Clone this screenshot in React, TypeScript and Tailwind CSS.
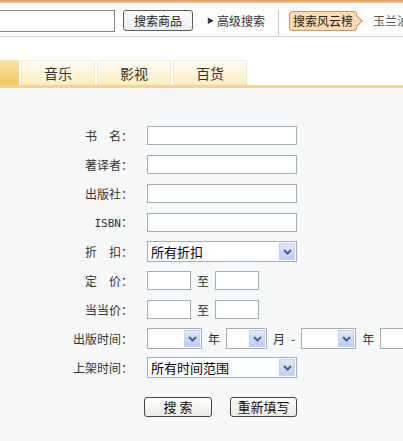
import { ReactNode } from 'react';

function Chevron() {
    return (
        <div className="flex h-[17px] w-[16px] shrink-0 items-center justify-center border border-[#c3d3f5] bg-gradient-to-b from-[#dfe8fd] to-[#b9cdf5]">
            <svg width="9" height="6" viewBox="0 0 9 6">
                <path d="M1 1 L4.5 4.5 L8 1" fill="none" stroke="#4d6185" strokeWidth="2" />
            </svg>
        </div>
    );
}

function Select({ width, text }: { width: string; text?: string }) {
    return (
        <div className={`flex h-[21px] shrink-0 items-center justify-between border border-[#a5acb2] bg-white pl-[3px] pr-px ${width}`}>
            <span className="text-[13px] leading-none text-black">{text}</span>
            <Chevron />
        </div>
    );
}

function Row({ label, children }: { label: ReactNode; children: ReactNode }) {
    return (
        <div className="flex h-[29px] items-center">
            <div className="w-[133px] shrink-0 text-right text-[12px] text-[#333]">{label}</div>
            <div className="ml-[14px] flex items-center">{children}</div>
        </div>
    );
}

const input = 'h-[19px] shrink-0 border border-[#a5acb2] bg-white';

export default function App() {
    return (
        <div
            className="flex h-[441px] w-[403px] flex-col overflow-hidden bg-white"
            style={{ fontFamily: '"Noto Sans CJK SC", "Noto Sans", sans-serif' }}
        >
            <div className="h-[3px] shrink-0 bg-gradient-to-b from-[#e39a55] to-[#f3c89a]" />

            {/* search bar */}
            <div className="flex h-[34px] shrink-0 items-start overflow-hidden whitespace-nowrap border-b border-[#d6d6d6] pt-[7px]">
                <div className="h-[22px] w-[115px] shrink-0 border border-l-0 border-[#7b8a7c] bg-white" />
                <button className="ml-[8px] flex h-[21px] w-[70px] shrink-0 items-center justify-center rounded-[3px] border border-[#5c5c5c] bg-gradient-to-b from-white to-[#eeeeee] text-[12px] text-[#222]">
                    搜索商品
                </button>
                <span className="ml-[14px] mt-[7px] shrink-0 text-[7px] leading-none text-[#333]">▶</span>
                <span className="ml-[3px] shrink-0 text-[12px] leading-[21px] text-[#333]">高级搜索</span>
                <div className="ml-[13px] h-[25px] w-px shrink-0 bg-[#c8c8c8]" />
                <div className="relative ml-[10px] mt-px flex h-[20px] shrink-0 items-center rounded-[3px] border border-[#c99660] bg-[#fddcb5] px-[3px] text-[12px] text-[#222]">
                    搜索风云榜
                    <div className="absolute right-[-5px] top-[5px] h-[8px] w-[8px] rotate-45 border-r border-t border-[#c99660] bg-[#fddcb5]" />
                </div>
                <span className="ml-[16px] shrink-0 text-[12px] leading-[21px] text-[#555]">玉兰油</span>
            </div>

            {/* tabs */}
            <div className="mt-[23px] flex h-[25px] shrink-0 items-stretch">
                <div className="w-[19px] bg-gradient-to-b from-[#fbe6a8] to-[#f3c85c]" />
                {['音乐', '影视', '百货'].map((t) => (
                    <div
                        key={t}
                        className="ml-[2px] flex w-[74px] items-center justify-center border-x border-t border-[#f6ebc8] bg-gradient-to-b from-[#fffdf6] to-[#fdedbf] text-[14px] text-[#333]"
                    >
                        {t}
                    </div>
                ))}
            </div>
            <div className="h-[3px] shrink-0 bg-[#efd88e]" />

            {/* form */}
            <div className="flex-1 bg-[#f7f8fa] pt-[33px]">
                <Row label="书　名：">
                    <div className={`${input} w-[150px]`} />
                </Row>
                <Row label="著译者：">
                    <div className={`${input} w-[150px]`} />
                </Row>
                <Row label="出版社：">
                    <div className={`${input} w-[150px]`} />
                </Row>
                <Row label={<span style={{ fontFamily: '"DejaVu Sans Mono", monospace' }} className="text-[11px]">ISBN<span style={{ fontFamily: '"Noto Sans CJK SC", sans-serif' }} className="text-[12px]">：</span></span>}>
                    <div className={`${input} w-[150px]`} />
                </Row>
                <Row label="折　扣：">
                    <Select width="w-[150px]" text="所有折扣" />
                </Row>
                <Row label="定　价：">
                    <div className={`${input} w-[44px]`} />
                    <span className="mx-[6px] text-[12px] text-[#333]">至</span>
                    <div className={`${input} w-[44px]`} />
                </Row>
                <Row label="当当价：">
                    <div className={`${input} w-[44px]`} />
                    <span className="mx-[6px] text-[12px] text-[#333]">至</span>
                    <div className={`${input} w-[44px]`} />
                </Row>
                <Row label="出版时间：">
                    <Select width="w-[55px]" />
                    <span className="mx-[6px] shrink-0 text-[12px] text-[#333]">年</span>
                    <Select width="w-[41px]" />
                    <span className="ml-[6px] shrink-0 text-[12px] text-[#333]">月</span>
                    <span className="mx-[6px] shrink-0 text-[12px] text-[#333]">-</span>
                    <Select width="w-[55px]" />
                    <span className="mx-[6px] shrink-0 text-[12px] text-[#333]">年</span>
                    <Select width="w-[41px]" />
                </Row>
                <Row label="上架时间：">
                    <Select width="w-[150px]" text="所有时间范围" />
                </Row>

                <div className="ml-[144px] mt-[15px] flex gap-[18px]">
                    <button className="flex h-[20px] w-[68px] items-center justify-center rounded-[3px] border border-[#444] bg-gradient-to-b from-white to-[#ecebe6] text-[13px] text-[#111]">
                        搜&nbsp;索
                    </button>
                    <button className="flex h-[20px] w-[67px] items-center justify-center rounded-[3px] border border-[#444] bg-gradient-to-b from-white to-[#ecebe6] text-[13px] text-[#111]">
                        重新填写
                    </button>
                </div>
            </div>
        </div>
    );
}
